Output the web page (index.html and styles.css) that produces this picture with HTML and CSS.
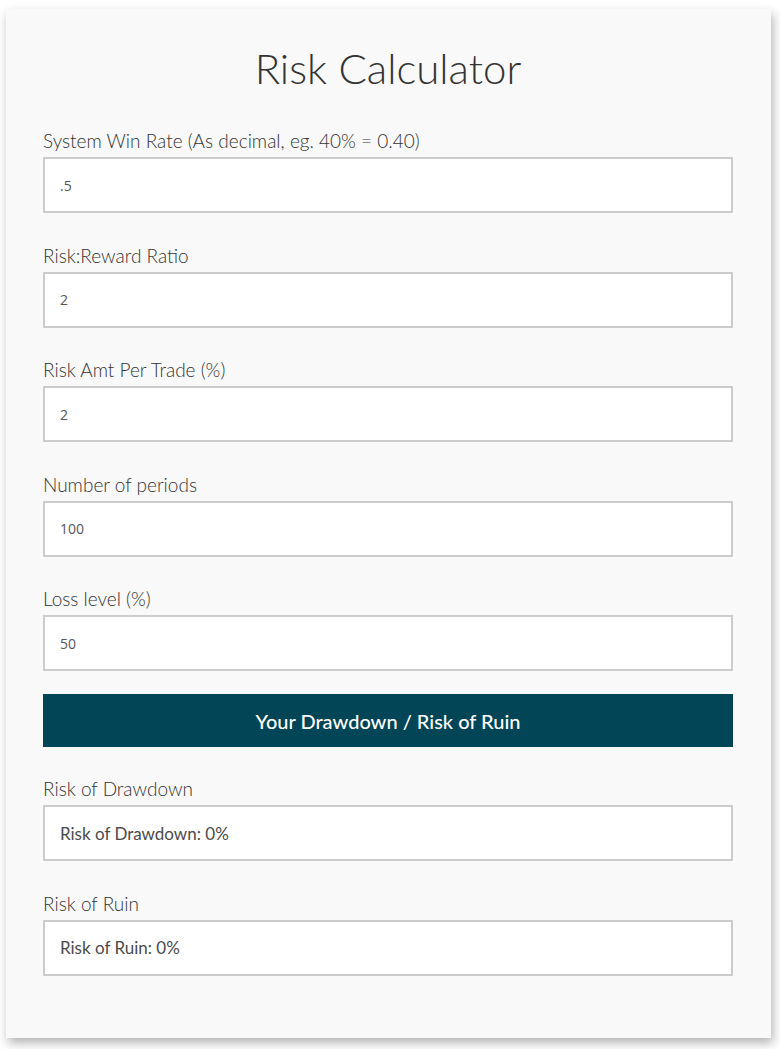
FILE: index.html
```html
<!DOCTYPE html>
<html lang="en">
<head>
<meta charset="UTF-8">
<meta name="viewport" content="width=device-width, initial-scale=1.0">
<title>Risk Calculator</title>
<link rel="stylesheet" href="styles.css">
</head>
<body>
<div class="calculator">
  <h1 class="title">Risk Calculator</h1>

  <div class="field">
    <label for="winRate">System Win Rate (As decimal, eg. 40% = 0.40)</label>
    <input type="text" id="winRate" value=".5">
  </div>
  <div class="field">
    <label for="ratio">Risk:Reward Ratio</label>
    <input type="text" id="ratio" value="2">
  </div>
  <div class="field">
    <label for="riskAmt">Risk Amt Per Trade (%)</label>
    <input type="text" id="riskAmt" value="2">
  </div>
  <div class="field">
    <label for="periods">Number of periods</label>
    <input type="text" id="periods" value="100">
  </div>
  <div class="field">
    <label for="lossLevel">Loss level (%)</label>
    <input type="text" id="lossLevel" value="50">
  </div>

  <button class="calc-btn" onclick="calculate()">Your Drawdown / Risk of Ruin</button>

  <div class="field result">
    <label>Risk of Drawdown</label>
    <div class="output" id="drawdownOut">Risk of Drawdown: 0%</div>
  </div>
  <div class="field result">
    <label>Risk of Ruin</label>
    <div class="output" id="ruinOut">Risk of Ruin: 0%</div>
  </div>
</div>

<script>
  function val(id) {
    return parseFloat(document.getElementById(id).value) || 0;
  }

  // Monte Carlo run: how often the account dips below the loss level
  function calculate() {
    const win = val('winRate');
    const rr = val('ratio');
    const risk = val('riskAmt') / 100;
    const periods = val('periods');
    const loss = val('lossLevel') / 100;
    const runs = 5000;
    let drawdowns = 0;
    let ruins = 0;

    for (let r = 0; r < runs; r++) {
      let equity = 1;
      let peak = 1;
      let hitDrawdown = false;
      for (let p = 0; p < periods; p++) {
        if (Math.random() < win) {
          equity += equity * risk * rr;
        } else {
          equity -= equity * risk;
        }
        if (equity > peak) peak = equity;
        if (equity <= peak * (1 - loss)) hitDrawdown = true;
      }
      if (hitDrawdown) drawdowns++;
      if (equity <= 1 - loss) ruins++;
    }

    document.getElementById('drawdownOut').textContent =
      'Risk of Drawdown: ' + Math.round(drawdowns / runs * 100) + '%';
    document.getElementById('ruinOut').textContent =
      'Risk of Ruin: ' + Math.round(ruins / runs * 100) + '%';
  }
</script>
</body>
</html>
```

FILE: styles.css
```css
body {
  font-family: Lato, "Open Sans", sans-serif;
  background-color: #fff;
  margin: 0;
  padding: 9px 9px 12px 6px;
}
.calculator {
  background-color: #f9f9f9;
  padding: 31px 38px 62px 37px;
  box-shadow: 2px 5px 10px rgba(0, 0, 0, 0.3);
}
.title {
  margin: 0 0 33px;
  text-align: center;
  font-size: 42px;
  line-height: 56px;
  font-weight: 300;
  color: #333;
}
.field {
  margin-bottom: 30.5px;
}
.field label {
  display: block;
  font-size: 19px;
  line-height: 24px;
  font-weight: 300;
  color: #333;
  margin-bottom: 4px;
}
.field input,
.output {
  box-sizing: border-box;
  width: 100%;
  height: 56px;
  border: 2px solid #ccc;
  background-color: #fff;
  padding: 0 15px;
  margin: 0;
}
.field input {
  display: block;
  font-family: "Open Sans", sans-serif;
  font-size: 14px;
  color: #555;
  outline: none;
}
.output {
  display: flex;
  align-items: center;
  font-size: 17px;
  color: #4a4a4a;
}
.field:nth-child(6) {
  margin-bottom: 23px;
}
.calc-btn {
  display: block;
  width: 100%;
  height: 53px;
  border: none;
  background-color: #014556;
  color: #fff;
  font-family: Lato, sans-serif;
  font-size: 20px;
  font-weight: 500;
  cursor: pointer;
  margin-bottom: 30px;
}
.result:last-child {
  margin-bottom: 0;
}
```
